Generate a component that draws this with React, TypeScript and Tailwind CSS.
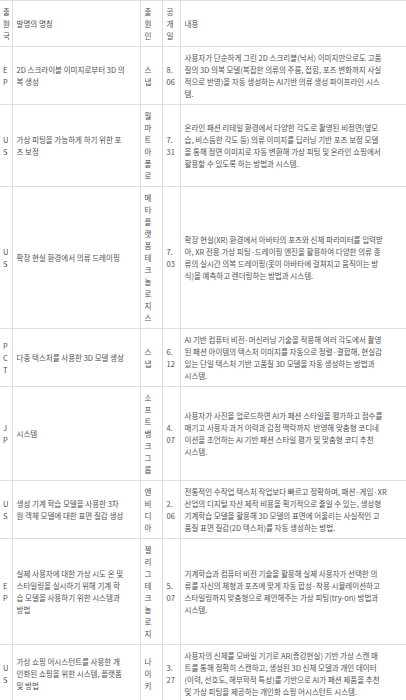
const rows = [
  {
    c: ["E", "P"],
    t: ["2D 스크라이블 이미지로부터 3D 의", "복 생성"],
    a: ["스", "냅"],
    d: ["8.", "06"],
    n: [
      "사용자가 단순하게 그린 2D 스크리블(낙서) 이미지만으로도 고품",
      "질의 3D 의복 모델(복잡한 의류의 주름, 접힘, 포즈 변화까지 사실",
      "적으로 반영)을 자동 생성하는 AI기반 의류 생성 파이프라인 시스",
      "템.",
    ],
  },
  {
    c: ["U", "S"],
    t: ["가상 피팅을 가능하게 하기 위한 포", "즈 보정"],
    a: ["월", "마", "트", "아", "폴", "로"],
    d: ["7.", "31"],
    n: [
      "온라인 패션 리테일 환경에서 다양한 각도로 촬영된 비정면(옆모",
      "습, 비스듬한 각도 등) 의류 이미지를 딥러닝 기반 포즈 보정 모델",
      "을 통해 정면 이미지로 자동 변환해 가상 피팅 및 온라인 쇼핑에서",
      "활용할 수 있도록 하는 방법과 시스템.",
    ],
  },
  {
    c: ["U", "S"],
    t: ["확장 현실 환경에서 의류 드레이핑"],
    a: ["메", "타", "플", "랫", "폼", "테", "크", "놀", "로", "지", "스"],
    d: ["7.", "03"],
    n: [
      "확장 현실(XR) 환경에서 아바타의 포즈와 신체 파라미터를 입력받",
      "아, XR 전용 가상 피팅·드레이핑 엔진을 활용하여 다양한 의류 종",
      "류의 실시간 의복 드레이핑(옷이 아바타에 걸쳐지고 움직이는 방",
      "식)을 예측하고 렌더링하는 방법과 시스템.",
    ],
  },
  {
    c: ["P", "C", "T"],
    t: ["다중 텍스처를 사용한 3D 모델 생성"],
    a: ["스", "냅"],
    d: ["6.", "12"],
    n: [
      "AI 기반 컴퓨터 비전·머신러닝 기술을 적용해 여러 각도에서 촬영",
      "된 패션 아이템의 텍스처 이미지를 자동으로 정렬·결합해, 현실감",
      "있는 단일 텍스처 기반 고품질 3D 모델을 자동 생성하는 방법과",
      "시스템.",
    ],
  },
  {
    c: ["J", "P"],
    t: ["시스템"],
    a: ["소", "프", "트", "뱅", "크", "그", "룹"],
    d: ["4.", "07"],
    n: [
      "사용자가 사진을 업로드하면 AI가 패션 스타일을 평가하고 점수를",
      "매기고 사용자 과거 이력과 감정 맥락까지  반영해 맞춤형 코디네",
      "이션을 조언하는 AI 기반 패션 스타일 평가 및 맞춤형 코디 추천",
      "시스템.",
    ],
  },
  {
    c: ["U", "S"],
    t: ["생성 기계 학습 모델을 사용한 3차", "원 객체 모델에 대한 표면 질감 생성"],
    a: ["엔", "비", "디", "아"],
    d: ["2.", "06"],
    n: [
      "전통적인 수작업 텍스처 작업보다 빠르고 정확하며, 패션·게임·XR",
      "산업의 디지털 자산 제작 비용을 획기적으로 줄일 수 있는, 생성형",
      "기계학습 모델을 활용해 3D 모델의 표면에 어울리는 사실적인 고",
      "품질 표면 질감(2D 텍스처)를 자동 생성하는 방법.",
    ],
  },
  {
    c: ["E", "P"],
    t: [
      "실제 사용자에 대한 가상 시도 온 및",
      "스타일링을 실시하기 위해 기계 학",
      "습 모델을 사용하기 위한 시스템과",
      "방법",
    ],
    a: ["젤", "리", "그", "테", "크", "놀", "로", "지"],
    d: ["5.", "07"],
    n: [
      "기계학습과 컴퓨터 비전 기술을 활용해 실제 사용자가 선택한 의",
      "류를 자신의 체형과 포즈에 맞게 자동 합성·착용 시뮬레이션하고",
      "스타일링까지 맞춤형으로 제안해주는 가상 피팅(try-on) 방법과",
      "시스템.",
    ],
  },
  {
    c: ["U", "S"],
    t: ["가상 쇼핑 어시스턴트를 사용한 개", "인화된 쇼핑을 위한 시스템, 플랫폼", "및 방법"],
    a: ["나", "이", "키"],
    d: ["3.", "27"],
    n: [
      "사용자의 신체를 모바일 기기로 AR(증강현실) 기반 가상 스캔 매",
      "트를 통해 정확히 스캔하고, 생성된 3D 신체 모델과 개인 데이터",
      "(이력, 선호도, 해부학적 특성)를 기반으로 AI가 패션 제품을 추천",
      "및 가상 피팅을 제공하는 개인화 쇼핑 어시스턴트 시스템.",
    ],
  },
];

function Lines({ items }: { items: string[] }) {
  return (
    <>
      {items.map((line, i) => (
        <span key={i} className="block h-[12px] whitespace-pre">
          {line}
        </span>
      ))}
    </>
  );
}

const cell = "border-t border-r border-b border-[#dedede] px-[4px] py-[4.5px] align-middle text-left font-normal";

export default function App() {
  return (
    <div className="w-[406px] h-[700px] overflow-hidden bg-white">
      <table className="w-[406px] table-fixed border-collapse text-[7.5px] leading-[12px] text-[#505050] font-['Noto_Sans_CJK_KR','Noto_Sans',sans-serif]">
        <colgroup>
          <col className="w-[12px]" />
          <col className="w-[128px]" />
          <col className="w-[22px]" />
          <col className="w-[18px]" />
          <col className="w-[226px]" />
        </colgroup>
        <thead>
          <tr>
            <th className={`${cell} pl-[3px] pr-0`}>
              <Lines items={["출", "원", "국"]} />
            </th>
            <th className={cell}>
              <Lines items={["발명의 명칭"]} />
            </th>
            <th className={cell}>
              <Lines items={["출", "원", "인"]} />
            </th>
            <th className={`${cell} px-[3px]`}>
              <Lines items={["공", "개", "일"]} />
            </th>
            <th className={`${cell} border-r-0`}>
              <Lines items={["내용"]} />
            </th>
          </tr>
        </thead>
        <tbody>
          {rows.map((r, i) => (
            <tr key={i}>
              <td className={`${cell} pl-[3px] pr-0`}>
                <Lines items={r.c} />
              </td>
              <td className={cell}>
                <Lines items={r.t} />
              </td>
              <td className={cell}>
                <Lines items={r.a} />
              </td>
              <td className={`${cell} px-[3px]`}>
                <Lines items={r.d} />
              </td>
              <td className={`${cell} border-r-0`}>
                <Lines items={r.n} />
              </td>
            </tr>
          ))}
        </tbody>
      </table>
    </div>
  );
}
